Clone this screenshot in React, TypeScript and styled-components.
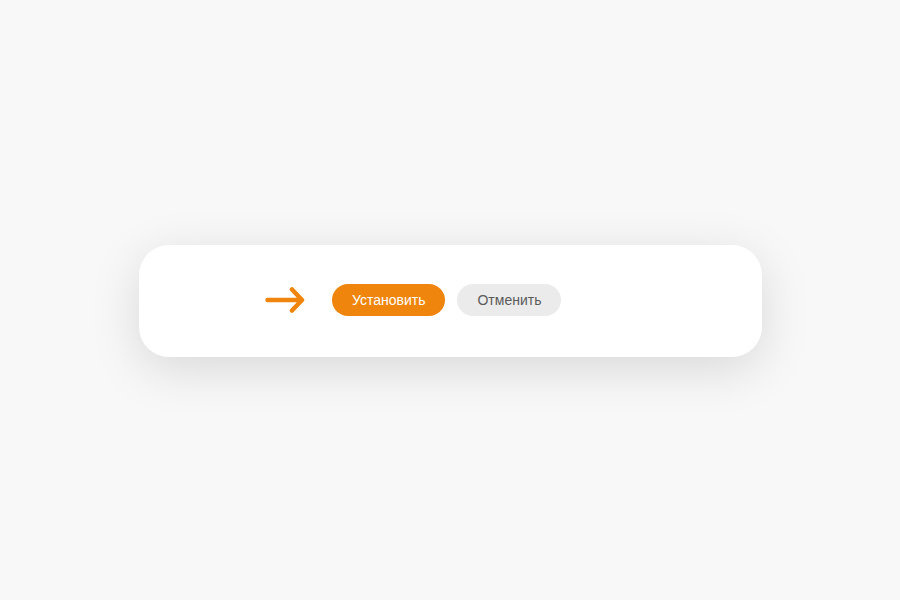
import * as React from 'react';
import styled, { createGlobalStyle } from 'styled-components';

const GlobalStyle = createGlobalStyle`
    html, body {
        margin: 0;
        padding: 0;
        background: #f8f8f8;
        font-family: "Liberation Sans", Arial, sans-serif;
    }
`

const Page = styled.div`
    width: 900px;
    height: 600px;
    display: flex;
    align-items: center;
    justify-content: center;
`

const Card = styled.div`
    box-sizing: border-box;
    width: 623px;
    height: 112px;
    margin-left: 1px;
    margin-top: 2px;
    background: #fff;
    border-radius: 30px;
    box-shadow: 0 12px 50px rgba(0, 0, 0, 0.13);
    display: flex;
    align-items: center;
    padding-left: 126px;
    padding-bottom: 2px;
`

const Arrow = styled.svg`
    width: 40px;
    height: 28px;
    margin-right: 27px;
    flex-shrink: 0;
`

const Button = styled.button<{ primary?: boolean }>`
    height: 32px;
    padding: 0 20px;
    border: none;
    border-radius: 16px;
    font-family: "Liberation Sans", Arial, sans-serif;
    font-size: 14px;
    cursor: pointer;
    background: ${p => (p.primary ? '#ef850c' : '#ebebeb')};
    color: ${p => (p.primary ? '#fff' : '#5a5a5a')};
    & + & {
        margin-left: 12px;
    }
`

export default function App() {
    return (
        <>
            <GlobalStyle />
            <Page>
                <Card>
                    <Arrow viewBox="0 0 40 28">
                        <path
                            d="M2.5 14 H36.5 M27 3.5 L37 14 L27 24.5"
                            fill="none"
                            stroke="#ef850c"
                            strokeWidth="4.5"
                            strokeLinecap="round"
                            strokeLinejoin="round"
                        />
                    </Arrow>
                    <Button primary>Установить</Button>
                    <Button>Отменить</Button>
                </Card>
            </Page>
        </>
    );
}
